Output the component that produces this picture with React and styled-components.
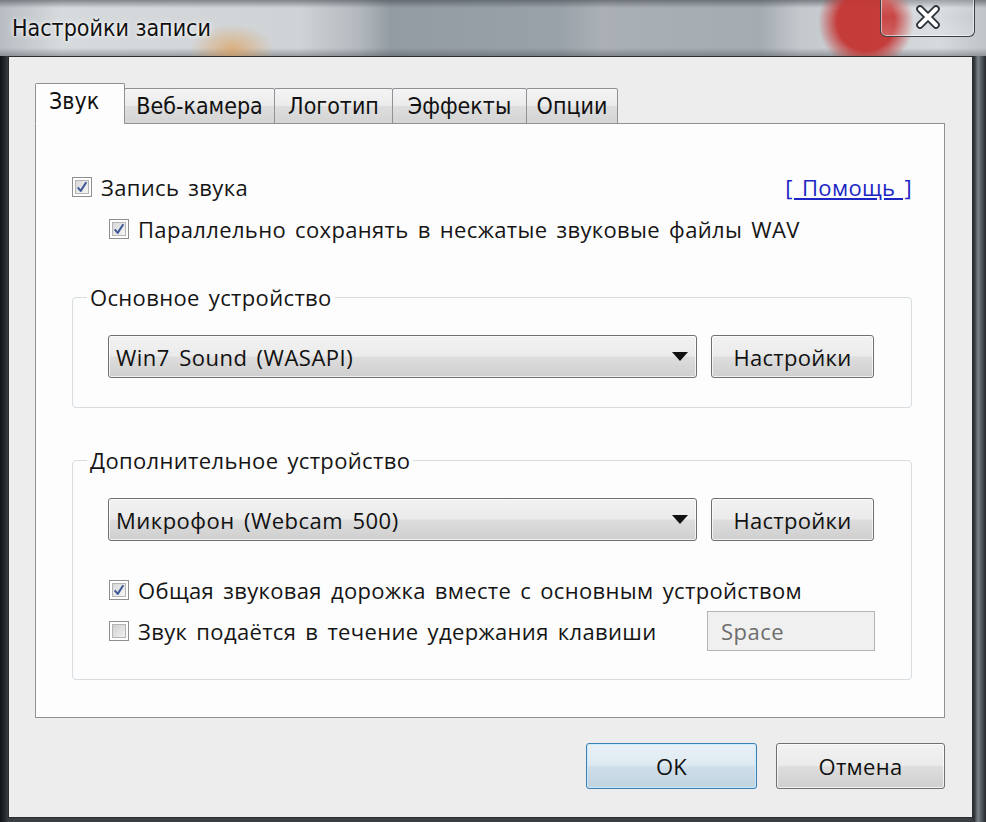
import React from 'react'
import styled, { createGlobalStyle } from 'styled-components'

const GlobalStyle = createGlobalStyle`
html, body {
  margin: 0;
  padding: 0;
  background: #1c1f22;
}
* {
  box-sizing: border-box;
}
`

const Window = styled.div`
width: 986px;
height: 822px;
display: flex;
flex-direction: column;
overflow: hidden;
background: linear-gradient(90deg, #101214 0, #2c3135 6px, #3a3f44 8px, #3a3f44 972px, #2a2e32 974px, #7d8489 978px, #5a6066 981px, #24282b 986px);
font-family: "Open Sans", "DejaVu Sans", sans-serif;
`

const TitleBar = styled.div`
position: relative;
height: 56px;
flex-shrink: 0;
display: flex;
align-items: center;
padding-left: 12px;
background:
  radial-gradient(ellipse 42px 26px at 232px 50px, rgba(226, 150, 66, 0.6), rgba(226, 150, 66, 0)),
  radial-gradient(circle 48px at 866px 22px, rgba(196, 52, 50, 0.95) 60%, rgba(196, 52, 50, 0)),
  linear-gradient(180deg, rgba(60, 66, 72, 0.55) 0, rgba(255, 255, 255, 0) 8px, rgba(255, 255, 255, 0) 48px, rgba(50, 56, 62, 0.35) 56px),
  linear-gradient(90deg, #b7bdc2 0, #d6dadd 60px, #cfd3d6 300px, #b2b8bd 360px, #949ca3 390px, #9aa2a9 560px, #aab0b5 600px, #a4abb1 760px, #c4c9cd 800px, #d6dadd 940px, #bfc4c8 986px);
`

const Title = styled.div`
font-family: "DejaVu Sans Condensed", "DejaVu Sans", sans-serif;
font-stretch: condensed;
font-size: 23px;
color: #111;
text-shadow: 0 0 6px rgba(255, 255, 255, 0.9), 0 0 3px rgba(255, 255, 255, 0.9);
`

const CloseButton = styled.div`
position: absolute;
right: 11px;
top: -2px;
width: 95px;
height: 39px;
display: flex;
align-items: center;
justify-content: center;
border: 1px solid #3b4046;
border-top: none;
border-radius: 0 0 6px 6px;
box-shadow: inset 0 0 0 1px rgba(255, 255, 255, 0.55);
background: linear-gradient(180deg, rgba(255, 255, 255, 0.25), rgba(255, 255, 255, 0.05) 50%, rgba(255, 255, 255, 0.2));
`

const Body = styled.div`
flex: 1;
display: flex;
padding: 0 13px 4px 8px;
`

const Client = styled.div`
flex: 1;
display: flex;
flex-direction: column;
background: #ededed;
border: 1px solid #2a2e31;
padding: 26px 27px 28px 26px;
`

const TabRow = styled.div`
display: flex;
align-items: flex-end;
height: 41px;
position: relative;
z-index: 1;
margin-bottom: -1px;
`

const Tab = styled.div`
width: ${p => p.$w}px;
height: ${p => (p.$active ? '41px' : '36px')};
margin-left: ${p => (p.$first ? '0' : '-1px')};
padding-left: ${p => (p.$active ? '13px' : '0')};
padding-bottom: ${p => (p.$active ? '6px' : '0')};
display: flex;
align-items: center;
justify-content: ${p => (p.$active ? 'flex-start' : 'center')};
font-family: "DejaVu Sans Condensed", "DejaVu Sans", sans-serif;
font-stretch: condensed;
font-size: 23px;
color: #111;
border: 1px solid #8e9196;
border-bottom: ${p => (p.$active ? '1px solid #fdfdfd' : '1px solid #8e9196')};
border-radius: 2px 2px 0 0;
background: ${p => (p.$active ? '#fdfdfd' : 'linear-gradient(180deg, #f4f4f4 0%, #ebebeb 50%, #dedede 51%, #d4d4d4 100%)')};
`

const Panel = styled.div`
flex: 1;
background: #fdfdfd;
border: 1px solid #8e9196;
padding: 51px 32px 0 36px;
display: flex;
flex-direction: column;
`

const TopRow = styled.div`
height: 24px;
display: flex;
justify-content: space-between;
align-items: center;
`

const HelpLink = styled.a`
color: #1b26c4;
font-size: 22px;
line-height: 24px;
letter-spacing: 0.35px;
word-spacing: 3px;
text-decoration: underline;
cursor: pointer;
`

const CheckRow = styled.label`
display: flex;
align-items: center;
gap: 9px;
font-size: 22px;
line-height: 24px;
letter-spacing: 0.35px;
word-spacing: 3px;
color: #151515;
height: 24px;
margin-left: ${p => p.$indent || 0}px;
margin-top: ${p => p.$top || 0}px;
`

const Box = styled.span`
width: 20px;
height: 20px;
flex-shrink: 0;
display: flex;
align-items: center;
justify-content: center;
border: 1px solid #8f8f8f;
background: #f4f4f4;
box-shadow: inset 0 0 0 2px #fff;
`

const BoxInner = styled.span`
width: 14px;
height: 14px;
display: flex;
align-items: center;
justify-content: center;
background: ${p => (p.$checked ? 'linear-gradient(135deg, #d8d8d8, #f6f6f6)' : 'linear-gradient(135deg, #cfcfcf, #f2f2f2)')};
border: 1px solid #b5b5b5;
`

const Group = styled.fieldset`
margin: 0;
margin-top: ${p => p.$top}px;
border: 1px solid #d6dce0;
border-radius: 4px;
padding: ${p => p.$pad};
min-inline-size: 0;
`

const Legend = styled.legend`
font-size: 22px;
letter-spacing: 0.35px;
word-spacing: 3px;
color: #151515;
padding: 0 3px;
margin-left: -21px;
line-height: 24px;
`

const DeviceRow = styled.div`
display: flex;
gap: 14px;
`

const Combo = styled.div`
width: 589px;
height: 43px;
display: flex;
align-items: center;
justify-content: space-between;
padding: 0 7px 0 7px;
border: 1px solid #707070;
border-radius: 3px;
font-size: 22px;
letter-spacing: 0.5px;
word-spacing: 3px;
color: #111;
background: linear-gradient(180deg, #f2f2f2 0%, #ebebeb 48%, #dddddd 52%, #cfcfcf 100%);
box-shadow: inset 0 0 0 1px rgba(255, 255, 255, 0.7);
`

const Arrow = styled.span`
width: 0;
height: 0;
margin-right: 1px;
border-left: 8px solid transparent;
border-right: 8px solid transparent;
border-top: 9px solid #111;
`

const Button = styled.div`
width: ${p => p.$w || 163}px;
height: ${p => p.$h || 43}px;
display: flex;
align-items: center;
justify-content: center;
font-size: 22px;
letter-spacing: 0.3px;
color: #111;
border: 1px solid ${p => (p.$default ? '#3c7fb1' : '#707070')};
border-radius: 3px;
background: ${p =>
    p.$default
      ? 'linear-gradient(180deg, #e9f1f6 0%, #dde9f1 48%, #cfdee9 52%, #c1d3e0 100%)'
      : 'linear-gradient(180deg, #f2f2f2 0%, #ebebeb 48%, #dddddd 52%, #cfcfcf 100%)'};
box-shadow: inset 0 0 0 1px ${p => (p.$default ? 'rgba(200, 235, 255, 0.9)' : 'rgba(255, 255, 255, 0.7)')};
`

const KeyRow = styled.div`
display: flex;
justify-content: space-between;
align-items: center;
margin-top: 9px;
margin-left: 1px;
`

const KeyField = styled.div`
width: 168px;
height: 40px;
display: flex;
align-items: center;
padding-left: 13px;
margin-right: 1px;
border: 1px solid #b5b5b5;
background: #f0f0f0;
font-size: 22px;
letter-spacing: 0.5px;
color: #6d6d6d;
`

const Footer = styled.div`
display: flex;
justify-content: flex-end;
gap: 19px;
margin-top: 25px;
`

const Check = () => (
  <svg width="14" height="14" viewBox="0 0 14 14">
    <path d="M2 7.5 L5.5 11.5 L12 1.5" fill="none" stroke="#3f5a96" strokeWidth="2.4" strokeLinejoin="round" />
  </svg>
)

const CheckBox = ({ checked }) => (
  <Box>
    <BoxInner $checked={checked}>{checked && <Check />}</BoxInner>
  </Box>
)

const CloseIcon = () => (
  <svg width="28" height="24" viewBox="0 0 28 24">
    <path d="M6 4 L22 20 M22 4 L6 20" stroke="#2b3035" strokeWidth="7.5" strokeLinecap="round" />
    <path d="M6 4 L22 20 M22 4 L6 20" stroke="#fff" strokeWidth="4" strokeLinecap="round" />
  </svg>
)

const tabs = [
  { label: 'Звук', w: 90 },
  { label: 'Веб-камера', w: 151 },
  { label: 'Логотип', w: 119 },
  { label: 'Эффекты', w: 135 },
  { label: 'Опции', w: 92 },
]

const App = () => {
  return (
    <>
      <GlobalStyle />
      <Window>
        <TitleBar>
          <Title>Настройки записи</Title>
          <CloseButton>
            <CloseIcon />
          </CloseButton>
        </TitleBar>
        <Body>
          <Client>
            <TabRow>
              {tabs.map((t, i) => (
                <Tab key={t.label} $w={t.w} $active={i === 0} $first={i === 0}>
                  {t.label}
                </Tab>
              ))}
            </TabRow>
            <Panel>
              <TopRow>
                <CheckRow>
                  <CheckBox checked />
                  Запись звука
                </CheckRow>
                <HelpLink>[ Помощь ]</HelpLink>
              </TopRow>
              <CheckRow $indent={37} $top={18}>
                <CheckBox checked />
                Параллельно сохранять в несжатые звуковые файлы WAV
              </CheckRow>

              <Group $top={44} $pad="26px 35px 29px 35px">
                <Legend>Основное устройство</Legend>
                <DeviceRow>
                  <Combo>
                    Win7 Sound (WASAPI)
                    <Arrow />
                  </Combo>
                  <Button>Настройки</Button>
                </DeviceRow>
              </Group>

              <Group $top={40} $pad="26px 35px 28px 35px">
                <Legend>Дополнительное устройство</Legend>
                <DeviceRow>
                  <Combo>
                    Микрофон (Webcam 500)
                    <Arrow />
                  </Combo>
                  <Button>Настройки</Button>
                </DeviceRow>
                <CheckRow $indent={1} $top={37}>
                  <CheckBox checked />
                  Общая звуковая дорожка вместе с основным устройством
                </CheckRow>
                <KeyRow>
                  <CheckRow>
                    <CheckBox />
                    Звук подаётся в течение удержания клавиши
                  </CheckRow>
                  <KeyField>Space</KeyField>
                </KeyRow>
              </Group>
            </Panel>
            <Footer>
              <Button $default $w={171} $h={46}>
                OK
              </Button>
              <Button $w={169} $h={46}>
                Отмена
              </Button>
            </Footer>
          </Client>
        </Body>
      </Window>
    </>
  )
}

export default App
